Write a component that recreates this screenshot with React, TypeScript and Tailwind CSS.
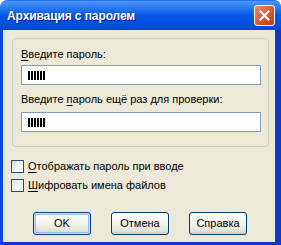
import React from "react";

const font = { fontFamily: '"Liberation Sans", Arial, sans-serif' };

function Acc({ k, rest }: { k: string; rest: string }) {
  return (
    <>
      <span className="underline underline-offset-[2px] decoration-1">{k}</span>
      {rest}
    </>
  );
}

function PwField() {
  return (
    <div className="h-[20px] w-[240px] border border-[#7F9DB9] bg-white flex items-center pl-[6px] gap-[1px]">
      {[0, 1, 2, 3, 4, 5].map((i) => (
        <div key={i} className="w-[2px] h-[9px] bg-black" />
      ))}
    </div>
  );
}

function Check({ children }: { children: React.ReactNode }) {
  return (
    <div className="flex items-center h-[13px]">
      <div className="w-[13px] h-[13px] border border-[#1C5180] bg-gradient-to-br from-[#DCDCD7] via-[#F4F4F0] to-white" />
      <span className="ml-[4px] text-[11px] leading-[13px] text-black">{children}</span>
    </div>
  );
}

function Btn({ children, def }: { children: React.ReactNode; def?: boolean }) {
  return (
    <div
      className={
        "w-[58px] h-[23px] rounded-[3px] border border-[#003C74] flex items-center justify-center text-[11px] text-black bg-gradient-to-b from-white via-[#F4F3EE] to-[#DCD8CC] " +
        (def ? "shadow-[inset_0_0_0_1px_#CEE7FF,inset_0_0_0_2px_#98B8EA]" : "shadow-[inset_0_-2px_0_#D6D0C5]")
      }
    >
      {children}
    </div>
  );
}

export default function App() {
  return (
    <div className="w-[281px] h-[245px] flex flex-col" style={font}>
      <div className="h-[30px] rounded-t-[7px] bg-gradient-to-b from-[#4A96FA] via-[#0058E6] to-[#0047D8] border-t border-[#2E72F0] flex items-center pl-[7px] pr-[6px]">
        <span
          className="text-white font-bold text-[12px] tracking-[-0.1px] flex-1"
          style={{ textShadow: "1px 1px 0 #0A1883" }}
        >
          Архивация с паролем
        </span>
        <div className="w-[21px] h-[21px] rounded-[3px] border border-white bg-gradient-to-br from-[#E98B6F] via-[#E3582F] to-[#C4381A] flex items-center justify-center">
          <svg width="11" height="11" viewBox="0 0 11 11">
            <path d="M1.5 1.5 L9.5 9.5 M9.5 1.5 L1.5 9.5" stroke="white" strokeWidth="2.2" strokeLinecap="square" />
          </svg>
        </div>
      </div>
      <div className="h-[215px] bg-[#ECE9D8] border-l-[3px] border-r-[6px] border-b-[3px] border-l-[#0B4AE0] border-r-[#0B3BC8] border-b-[#0A3AC8] flex flex-col">
        <div className="mt-[8px] ml-[9px] w-[257px] h-[109px] rounded-[4px] border border-[#D0D0BF] flex flex-col pl-[8px] pt-[9px]">
          <div className="h-[13px] text-[11px] leading-[13px] text-black">
            <Acc k="В" rest="ведите пароль:" />
          </div>
          <div className="mt-[4px]">
            <PwField />
          </div>
          <div className="mt-[8px] h-[13px] text-[11px] leading-[13px] text-black">
            Введите <span className="underline underline-offset-[2px]">п</span>ароль ещё раз для проверки:
          </div>
          <div className="mt-[6px]">
            <PwField />
          </div>
        </div>
        <div className="ml-[8px] mt-[13px] flex flex-col gap-[6px]">
          <Check>
            <Acc k="О" rest="тображать пароль при вводе" />
          </Check>
          <Check>
            <Acc k="Ш" rest="ифровать имена файлов" />
          </Check>
        </div>
        <div className="mt-[20px] ml-[30px] flex gap-[20px]">
          <Btn def>OK</Btn>
          <Btn>Отмена</Btn>
          <Btn>Справка</Btn>
        </div>
      </div>
    </div>
  );
}
